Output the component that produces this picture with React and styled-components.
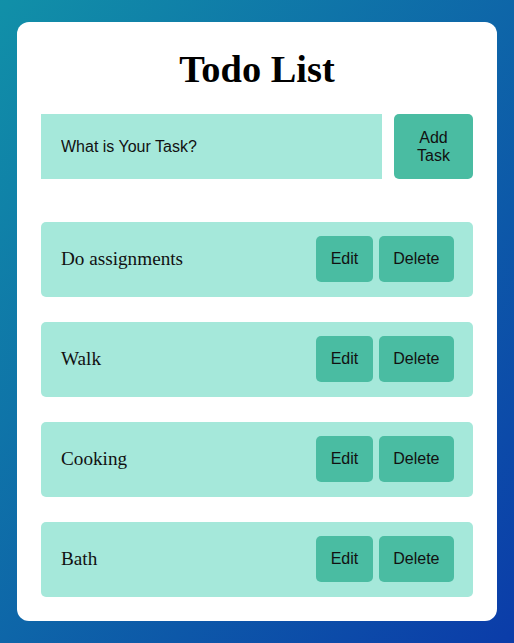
import styled, { createGlobalStyle } from 'styled-components'

const GlobalStyle = createGlobalStyle`
    * {
        box-sizing: border-box;
    }

    body {
        margin: 0;
        font-family: "Liberation Serif", "Times New Roman", serif;
    }
`

const Page = styled.div`
    min-height: 100vh;
    display: flex;
    align-items: center;
    justify-content: center;
    background: linear-gradient(to bottom right, #1190a8, #0b3ca9);
`

const Card = styled.div`
    width: 480px;
    background: #ffffff;
    border-radius: 12px;
    padding: 24px 24px 24px;
`

const Title = styled.h1`
    margin: 0 0 22px;
    font-size: 38.4px;
    line-height: 46px;
    font-weight: bold;
    text-align: center;
    color: #000;
`

const Form = styled.div`
    display: flex;
    gap: 12px;
    margin-bottom: 42.5px;
`

const Input = styled.input`
    flex: 1;
    min-width: 0;
    height: 65px;
    border: none;
    outline: none;
    padding: 0 20px;
    background: #a5e8da;
    font-family: "Liberation Sans", Arial, sans-serif;
    font-size: 16px;
    color: #111;
`

const Button = styled.button`
    border: none;
    border-radius: 5px;
    background: #4abca2;
    color: #111;
    font-family: "Liberation Sans", Arial, sans-serif;
    font-size: 16px;
    line-height: 18px;
    padding: ${props => props.tall ? '14px 15px' : '0 14.5px'};
    width: ${props => props.tall ? '79px' : 'auto'};
    height: ${props => props.tall ? '65px' : '46px'};
    cursor: pointer;
`

const List = styled.div`
    display: flex;
    flex-direction: column;
    gap: 24.5px;
`

const Row = styled.div`
    display: flex;
    align-items: center;
    justify-content: space-between;
    height: 75.5px;
    padding: 0 19px 0 20px;
    background: #a5e8da;
    border-radius: 5px;
`

const TaskName = styled.span`
    font-size: 19.2px;
    color: #111;
`

const Actions = styled.div`
    display: flex;
    gap: 6px;
`

const tasks = ['Do assignments', 'Walk', 'Cooking', 'Bath']

const App = () => {

    return (
        <Page>
            <GlobalStyle />
            <Card>
                <Title>Todo List</Title>

                <Form>
                    <Input defaultValue="What is Your Task?" />
                    <Button tall>Add Task</Button>
                </Form>

                <List>
                    {tasks.map((task) =>
                        <Row key={task}>
                            <TaskName>{task}</TaskName>
                            <Actions>
                                <Button>Edit</Button>
                                <Button>Delete</Button>
                            </Actions>
                        </Row>
                    )}
                </List>
            </Card>
        </Page>
    )
}

export default App
